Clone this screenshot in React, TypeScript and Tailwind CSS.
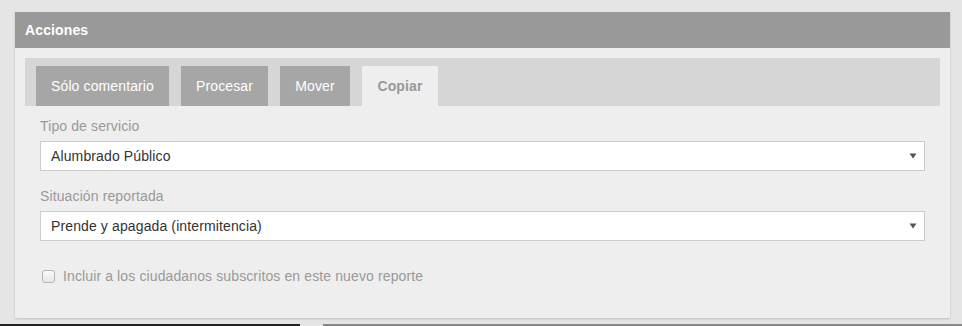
import React from "react";

export default function App() {
  const tabs = [
    { t: "Sólo comentario", w: "w-[133px]" },
    { t: "Procesar", w: "w-[87px]" },
    { t: "Mover", w: "w-[70px]" },
  ];
  return (
    <div
      className="w-[962px] h-[326px] bg-[#e5e5e5] flex flex-col overflow-hidden tracking-[0.12px]"
      style={{ fontFamily: '"Liberation Sans", Arial, sans-serif' }}
    >
      <div className="pt-[12px] pl-[15px]">
        <div className="w-[935px] bg-[#eeeeee] shadow-[0_1px_2px_rgba(0,0,0,0.18)]">
          <div className="h-[36px] bg-[#999999] px-[10px] flex items-center text-white font-bold text-[14px]">
            Acciones
          </div>
          <div className="h-[270px] px-[10px] pt-[10px]">
            <div className="h-[48px] bg-[#d6d6d6] pl-[11px] pt-[8px] flex gap-[12px]">
              {tabs.map((x) => (
                <div
                  key={x.t}
                  className={`${x.w} h-[40px] bg-[#a6a6a6] flex items-center justify-center text-white text-[14px]`}
                >
                  {x.t}
                </div>
              ))}
              <div className="h-[40px] w-[76px] bg-[#eeeeee] flex items-center justify-center text-[#999999] font-bold text-[14px]">
                Copiar
              </div>
            </div>
            <div className="px-[15px] pt-[10px]">
              <div className="text-[14px] leading-[20px] text-[#999999] mb-[5px]">Tipo de servicio</div>
              <div className="h-[30px] bg-white border border-[#cccccc] flex items-center justify-between pl-[10px] pr-[7px] text-[14px] text-[#333333]">
                <span>Alumbrado Público</span>
                <svg width="8" height="6" viewBox="0 0 8 6">
                  <path d="M0.5 0.5 H7.5 L4 5.5 Z" fill="#555" />
                </svg>
              </div>
              <div className="text-[14px] leading-[20px] text-[#999999] mt-[15px] mb-[5px]">Situación reportada</div>
              <div className="h-[30px] bg-white border border-[#cccccc] flex items-center justify-between pl-[10px] pr-[7px] text-[14px] text-[#333333]">
                <span>Prende y apagada (intermitencia)</span>
                <svg width="8" height="6" viewBox="0 0 8 6">
                  <path d="M0.5 0.5 H7.5 L4 5.5 Z" fill="#555" />
                </svg>
              </div>
              <div className="mt-[25px] h-[20px] flex items-center pl-[2px] gap-[8px] text-[14px] text-[#999999]">
                <span className="w-[13px] h-[13px] rounded-[3px] border border-[#b5b5b5] bg-gradient-to-b from-[#fafafa] to-[#e6e6e6]" />
                <span>Incluir a los ciudadanos subscritos en este nuevo reporte</span>
              </div>
            </div>
          </div>
        </div>
      </div>
      <div className="flex-1" />
      <div className="h-[2px] flex">
        <div className="w-[300px] bg-[#222222]" />
        <div className="w-[23px]" />
        <div className="flex-1 bg-[#888888]" />
      </div>
    </div>
  );
}
